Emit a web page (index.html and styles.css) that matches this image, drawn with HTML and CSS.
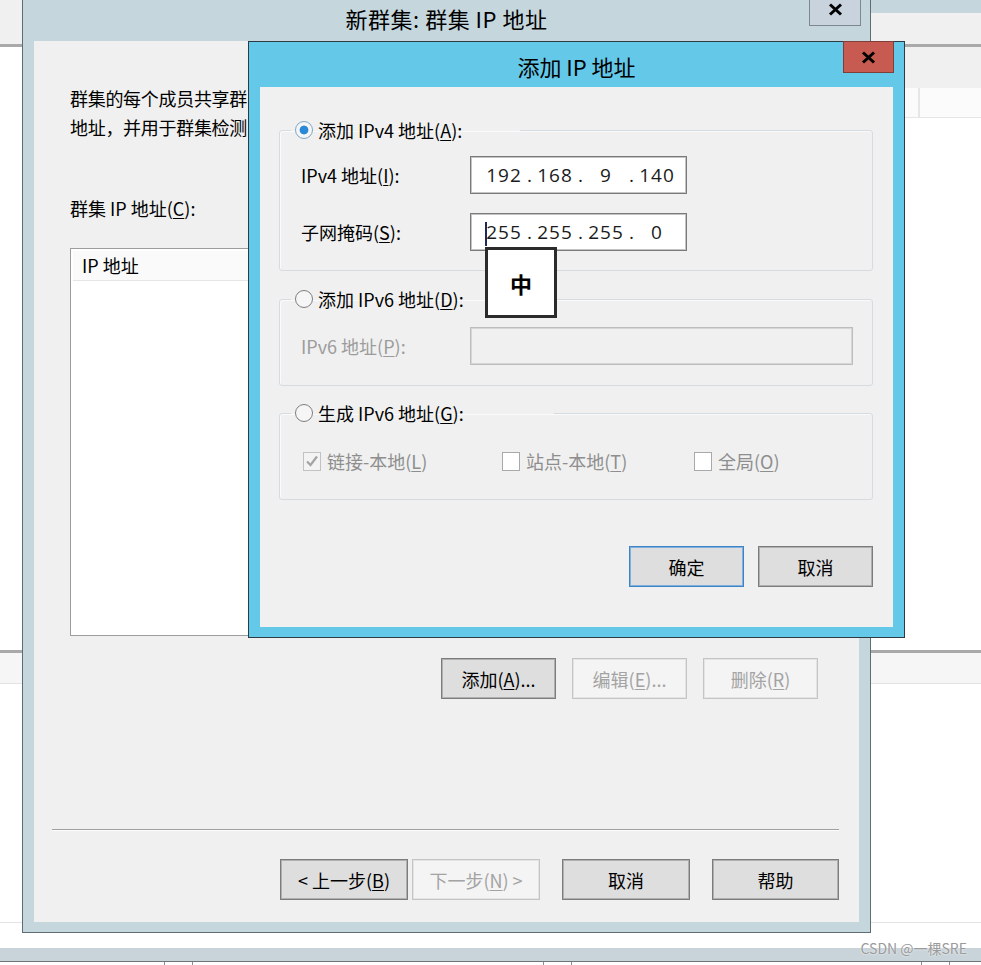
FILE: index.html
```html
<!DOCTYPE html>
<html lang="zh-CN">
<head>
  <meta charset="UTF-8" />
  <title>新群集: 群集 IP 地址</title>
  <link rel="stylesheet" href="styles.css">
</head>
<body>
  <div class="desktop">

    <!-- background console window -->
    <div class="bg-app">
      <div class="bg-caption"><div class="bg-caption-left"></div><div class="bg-caption-right"></div></div>
      <div class="bg-toolbar"></div>
      <div class="bg-main">
        <div class="bg-pane-left"></div>
        <div class="bg-pane-right">
          <div class="bg-gap"></div>
          <div class="bg-header"><span class="bg-col"></span></div>
        </div>
      </div>
      <div class="bg-bottom">
        <div class="bg-bottom-head"></div>
        <div class="bg-bottom-body"></div>
        <div class="bg-bottom-foot"></div>
      </div>
      <div class="bg-status"></div>
      <div class="bg-cells">
        <span></span><span></span><span></span><span></span><span></span><span></span><span></span>
      </div>
    </div>

    <!-- wizard -->
    <div class="window wizard">
      <div class="wizard-title">
        新群集: 群集 IP 地址
        <span class="close-btn">
          <svg width="15" height="13" viewBox="0 0 15 13"><path d="M2 1.5 L13 11.5 M13 1.5 L2 11.5" stroke="#000" stroke-width="3"/></svg>
        </span>
      </div>
      <div class="wizard-client">
        <p class="wizard-desc">群集的每个成员共享群<br>地址，并用于群集检测</p>
        <div class="field-label">群集 IP 地址(<u>C</u>):</div>
        <div class="listview">
          <div class="lv-header"><span class="lv-col">IP 地址</span></div>
        </div>
        <div class="btn-row">
          <button class="btn">添加(<u>A</u>)...</button>
          <button class="btn" disabled>编辑(<u>E</u>)...</button>
          <button class="btn" disabled>删除(<u>R</u>)</button>
        </div>
        <div class="separator"></div>
        <div class="nav-row">
          <button class="btn nav">&lt; 上一步(<u>B</u>)</button>
          <button class="btn nav next" disabled>下一步(<u>N</u>) &gt;</button>
          <button class="btn nav gap">取消</button>
          <button class="btn nav gap help">帮助</button>
        </div>
      </div>
    </div>

    <!-- add ip dialog -->
    <div class="window add-ip">
      <div class="dlg-title">
        添加 IP 地址
        <span class="close-red">
          <svg width="15" height="13" viewBox="0 0 15 13"><path d="M2 1.5 L13 11.5 M13 1.5 L2 11.5" stroke="#000" stroke-width="3"/></svg>
        </span>
      </div>
      <div class="dlg-client">
        <fieldset class="group">
          <legend><span class="radio checked"></span><span>添加 IPv4 地址(<u>A</u>):</span></legend>
          <div class="ip-row">
            <span class="ip-label">IPv4 地址(<u>I</u>):</span>
            <div class="ip-input">
              <span class="oct">192</span><span class="dot">.</span><span class="oct">168</span><span class="dot">.</span><span class="oct">9</span><span class="dot">.</span><span class="oct">140</span>
            </div>
          </div>
          <div class="ip-row second">
            <span class="ip-label">子网掩码(<u>S</u>):</span>
            <div class="ip-input">
              <span class="oct"><span class="caret"></span>255</span><span class="dot">.</span><span class="oct">255</span><span class="dot">.</span><span class="oct">255</span><span class="dot">.</span><span class="oct">0</span>
            </div>
          </div>
        </fieldset>

        <fieldset class="group v6">
          <legend><span class="radio"></span><span>添加 IPv6 地址(<u>D</u>):</span></legend>
          <div class="ip-row">
            <span class="ip-label muted">IPv6 地址(<u>P</u>):</span>
            <div class="ip-input disabled"></div>
          </div>
        </fieldset>

        <fieldset class="group gen">
          <legend class="legend-wider"><span class="radio"></span><span>生成 IPv6 地址(<u>G</u>):</span></legend>
          <div class="check-row">
            <span class="check-item"><span class="check on"><svg width="16" height="16" viewBox="0 0 16 16"><path d="M3 8.5 L6.5 12 L13 3.5" fill="none" stroke="#a4a4a4" stroke-width="2.2"/></svg></span><span>链接-本地(<u>L</u>)</span></span>
            <span class="check-item"><span class="check"></span><span>站点-本地(<u>T</u>)</span></span>
            <span class="check-item"><span class="check"></span><span>全局(<u>O</u>)</span></span>
          </div>
        </fieldset>

        <div class="dlg-buttons">
          <button class="btn default">确定</button>
          <button class="btn">取消</button>
        </div>
      </div>
    </div>

    <div class="ime">中</div>
    <div class="watermark">CSDN @一棵SRE</div>
  </div>
</body>
</html>
```

FILE: styles.css
```css
* {
  box-sizing: border-box;
}

body {
  margin: 0;
  width: 981px;
  height: 965px;
  overflow: hidden;
  background: #fff;
  color: #000;
  font-family: "Noto Sans CJK SC", "Noto Sans", sans-serif;
  font-size: 18px;
}

u {
  text-decoration-thickness: 1px;
  text-underline-offset: 2px;
}

.desktop {
  position: relative;
  width: 981px;
  height: 965px;
}

/* ---------- background window ---------- */
.bg-app {
  display: flex;
  flex-direction: column;
  height: 965px;
}

.bg-caption {
  height: 13px;
  display: flex;
}
.bg-caption-left { flex: 1; background: #f0f0f0; }
.bg-caption-right { width: 111px; background: #c6d6dd; }

.bg-toolbar {
  height: 34px;
  background: #f0f0f0;
  border-bottom: 3px solid #a9a9a9;
}

.bg-main {
  height: 603px;
  display: grid;
  grid-template-columns: 500px 1fr;
}
.bg-pane-left { background: #fff; }
.bg-pane-right {
  background: #fff;
  display: flex;
  flex-direction: column;
}
.bg-gap { height: 41px; background: #f0f0f0; }
.bg-header {
  height: 30px;
  background: #fbfbfb;
  border-bottom: 1px solid #e6e6e6;
  display: flex;
}
.bg-col {
  width: 420px;
  border-right: 2px solid #e6e6e6;
}

.bg-bottom {
  border-top: 3px solid #a9a9a9;
  background: #fff;
}
.bg-bottom-head {
  height: 31px;
  background: #f6f6f6;
  border-bottom: 1px solid #e3e3e3;
}
.bg-bottom-body {
  height: 239px;
  border-bottom: 1px solid #e3e3e3;
}
.bg-bottom-foot { height: 25px; }

.bg-status {
  height: 14px;
  background: #c9d4da;
  border-bottom: 1px solid #6e7478;
}

.bg-cells {
  flex: 1;
  display: grid;
  grid-template-columns: 165px 28px 351px 28px 350px 28px 1fr;
}
.bg-cells span { border-right: 1px solid #8c8c8c; }
.bg-cells span:last-child { border-right: 0; }

/* ---------- windows ---------- */
.window {
  position: absolute;
  display: flex;
  flex-direction: column;
}

.btn {
  font: inherit;
  font-size: 18px;
  width: 115px;
  height: 41px;
  padding: 0;
  color: #000;
  background: #dedede;
  border: 1px solid #7c7c7c;
  box-shadow: inset 0 0 0 1px #b0b0b0;
}
.btn:disabled {
  color: #a3a3a3;
  background: #f4f4f4;
  border-color: #c4c4c4;
  box-shadow: inset 0 0 0 1px #e4e4e4;
}

/* wizard */
.wizard {
  left: 22px;
  top: 0;
  width: 849px;
  height: 933px;
  border: 1px solid #5f6c74;
  border-top: 0;
  background: #c5d6dd;
  padding: 0 11px 10px;
}

.wizard-title {
  position: relative;
  height: 41px;
  flex: none;
  text-align: center;
  font-size: 22px;
  letter-spacing: 0.5px;
  line-height: 36px;
}

.close-btn {
  position: absolute;
  right: -2px;
  top: -7px;
  width: 52px;
  height: 33px;
  background: #c8d3de;
  border: 1px solid #7d8792;
  display: flex;
  align-items: center;
  justify-content: center;
}

.wizard-client {
  flex: 1;
  background: #f0f0f0;
  padding: 43px 41px 0 36px;
  display: flex;
  flex-direction: column;
}

/* only the part left of the dialog is visible */
.wizard-desc {
  margin: 0;
  line-height: 29px;
  letter-spacing: -0.3px;
  white-space: nowrap;
}

.field-label {
  margin-top: 52px;
  line-height: 28px;
}

.listview {
  margin-top: 26px;
  height: 388px;
  background: #fff;
  border: 1px solid #9d9d9d;
  padding: 2px;
}

.lv-header {
  height: 30px;
  background: #fafafa;
  border-bottom: 1px solid #e5e5e5;
  display: flex;
}
.lv-col {
  width: 300px;
  padding-left: 9px;
  line-height: 29px;
  border-right: 1px solid #e5e5e5;
}

.btn-row {
  margin-top: 22px;
  display: flex;
  justify-content: flex-end;
  gap: 16px;
}

.separator {
  margin: 130px -21px 0 -18px;
  border-top: 1px solid #a0a0a0;
  border-bottom: 1px solid #fcfcfc;
}

.nav-row {
  margin: 28px -21px 0 0;
  display: flex;
  justify-content: flex-end;
}
.btn.nav { width: 128px; }
.btn.next { margin-left: 4px; }
.btn.gap { margin-left: 22px; }
.btn.help { width: 127px; }

/* add ip dialog */
.add-ip {
  left: 248px;
  top: 41px;
  width: 657px;
  height: 597px;
  border: 1px solid #2d3b45;
  background: #64c8e8;
  padding: 0 11px 10px;
}

.dlg-title {
  position: relative;
  height: 45px;
  flex: none;
  text-align: center;
  font-size: 22px;
  line-height: 48px;
}

.close-red {
  position: absolute;
  right: -1px;
  top: -1px;
  width: 51px;
  height: 32px;
  background: #c75a51;
  border: 1px solid #7e3f39;
  display: flex;
  align-items: center;
  justify-content: center;
}

.dlg-client {
  flex: 1;
  background: #f0f0f0;
  padding: 31px 20px 0 19px;
}

.group {
  margin: 0;
  min-width: 0;
  padding: 14px 19px 19px 11px;
  border: 1px solid #d4dce1;
  border-radius: 3px;
  box-shadow: inset 1px 1px 0 #fafafa;
}
.group.v6 {
  margin-top: 16px;
  padding-top: 16px;
  padding-bottom: 20px;
}
.group.gen {
  margin-top: 15px;
  padding-top: 23px;
  padding-bottom: 27px;
}

legend {
  height: 24px;
  line-height: 24px;
  padding: 0 58px 0 4px;
  display: flex;
  align-items: center;
  gap: 5px;
}
.legend-wider { padding-right: 90px; }

.radio {
  width: 18px;
  height: 18px;
  border-radius: 50%;
  border: 1px solid #7e7e7e;
  background: #f6f6f6;
  flex: none;
}
.radio.checked {
  border-color: #7fa6c8;
  background: radial-gradient(circle, #2a88d8 0 4px, #f6f6f6 4.8px);
}

.ip-row {
  display: flex;
  align-items: center;
  height: 38px;
  padding-left: 10px;
}
.ip-row.second { margin-top: 19px; }

.ip-label {
  width: 169px;
  flex: none;
}
.muted { color: #9c9c9c; }

.ip-input {
  width: 217px;
  height: 38px;
  background: #fff;
  border: 1px solid #7a7a7a;
  box-shadow: inset 0 0 0 1px #c4c4c4;
  display: flex;
  align-items: center;
  padding-left: 14px;
  font-family: "Open Sans", "Noto Sans", sans-serif;
  font-size: 19px;
  color: #1b1b1b;
}
.ip-input.disabled {
  width: 385px;
  background: #f0f0f0;
  border-color: #bdbdbd;
  box-shadow: inset 0 0 0 1px #d6d6d6;
}

.oct {
  position: relative;
  width: 38px;
  text-align: center;
  letter-spacing: 1px;
}
.dot {
  width: 13px;
  text-align: center;
}

.caret {
  position: absolute;
  left: 0;
  top: 3px;
  width: 2px;
  height: 24px;
  background: #1c2a58;
}

.check-row {
  display: grid;
  grid-template-columns: 199px 192px auto;
  padding-left: 12px;
  height: 24px;
  align-items: center;
  color: #8e8e8e;
}
.check-item {
  display: flex;
  align-items: center;
  gap: 6px;
}
.check {
  width: 18px;
  height: 19px;
  flex: none;
  background: #fff;
  border: 1px solid #a9a9a9;
  display: flex;
  align-items: center;
  justify-content: center;
}
.check.on {
  background: #f3f3f3;
  border-color: #c2c2c2;
}

.dlg-buttons {
  margin-top: 46px;
  display: flex;
  justify-content: flex-end;
  gap: 14px;
}
.btn.default {
  border-color: #3e83c6;
  box-shadow: inset 0 0 0 1px #7fb0df;
}

/* ime indicator */
.ime {
  position: absolute;
  left: 485px;
  top: 247px;
  width: 72px;
  height: 71px;
  background: #fff;
  border: 3px solid #2b2b2b;
  display: flex;
  align-items: center;
  justify-content: center;
  font-size: 22px;
  font-weight: bold;
}

.watermark {
  position: absolute;
  right: 14px;
  top: 938px;
  font-family: "Noto Sans CJK SC", "Liberation Sans", sans-serif;
  font-size: 14px;
  line-height: 20px;
  color: #9b9b9b;
  text-shadow: 0 0 2px #fff;
}
```
